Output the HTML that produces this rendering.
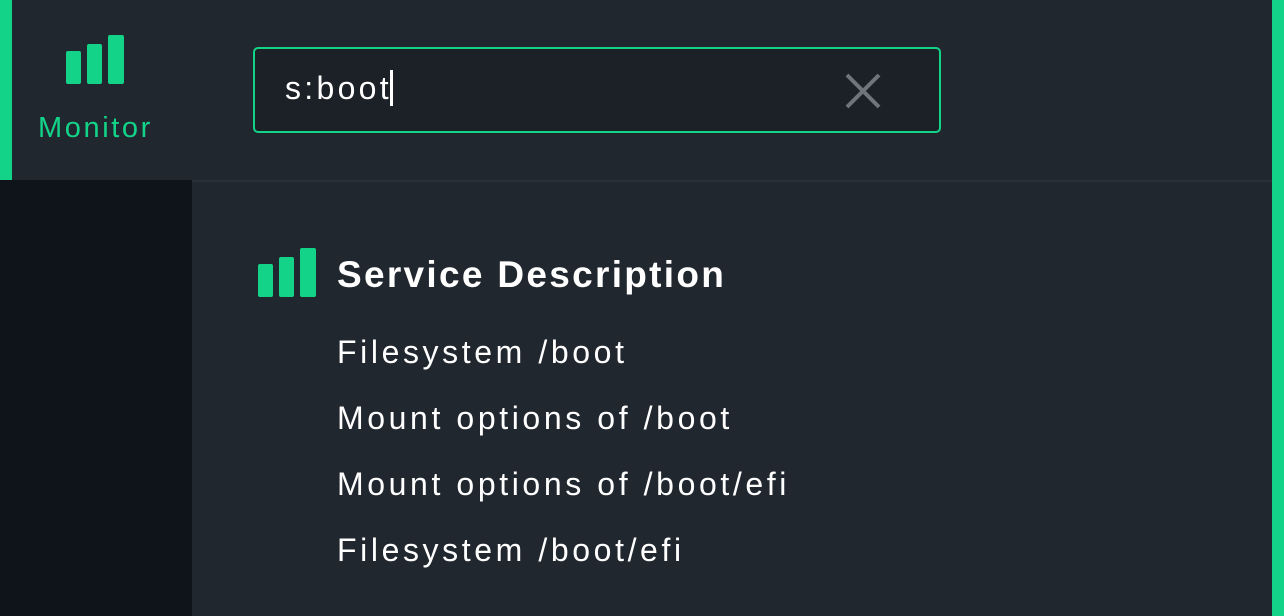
<!DOCTYPE html>
<html><head><style>
body{margin:0;width:1284px;height:616px;background:#21272f;position:relative;overflow:hidden;font-family:"Liberation Sans",sans-serif;}
.a{position:absolute}
.t{position:absolute;color:#fff;font-size:32px;left:337px;white-space:nowrap;letter-spacing:3.6px}
</style></head><body>
<div class="a" style="left:0;top:0;width:12px;height:180px;background:#13d389"></div>
<div class="a" style="left:1272px;top:0;width:12px;height:616px;background:#13d389"></div>
<div class="a" style="left:0;top:180px;width:192px;height:436px;background:#0f141a"></div>
<div class="a" style="left:192px;top:180px;width:1080px;height:2px;background:#2a3039"></div>
<svg class="a" style="left:66px;top:35px" width="58" height="49"><rect x="0" y="16" width="15" height="33" rx="2" fill="#13d389"/><rect x="21" y="9" width="15" height="40" rx="2" fill="#13d389"/><rect x="42" y="0" width="16" height="49" rx="2" fill="#13d389"/></svg>
<div class="a" style="left:38px;top:112px;color:#13d389;font-size:29px;letter-spacing:2.6px">Monitor</div>
<div class="a" style="left:253px;top:47px;width:684px;height:82px;border:2px solid #13d389;border-radius:5px;background:#1c2027"></div>
<div class="a" style="left:285px;top:70px;color:#fff;font-size:32px;letter-spacing:3.3px">s:boot<span style="display:inline-block;width:3px;height:36px;background:#fff;vertical-align:-7px;margin-left:-2px"></span></div>
<svg class="a" style="left:845px;top:73px" width="36" height="36"><path d="M2 2L34 34M34 2L2 34" stroke="#70757c" stroke-width="4"/></svg>
<svg class="a" style="left:258px;top:248px" width="58" height="49"><rect x="0" y="16" width="15" height="33" rx="2" fill="#13d389"/><rect x="21" y="9" width="15" height="40" rx="2" fill="#13d389"/><rect x="42" y="0" width="16" height="49" rx="2" fill="#13d389"/></svg>
<div class="t" style="top:254px;font-size:37px;font-weight:bold;letter-spacing:2.3px">Service Description</div>
<div class="t" style="top:334px">Filesystem /boot</div>
<div class="t" style="top:400px">Mount options of /boot</div>
<div class="t" style="top:466px">Mount options of /boot/efi</div>
<div class="t" style="top:532px">Filesystem /boot/efi</div>
</body></html>
